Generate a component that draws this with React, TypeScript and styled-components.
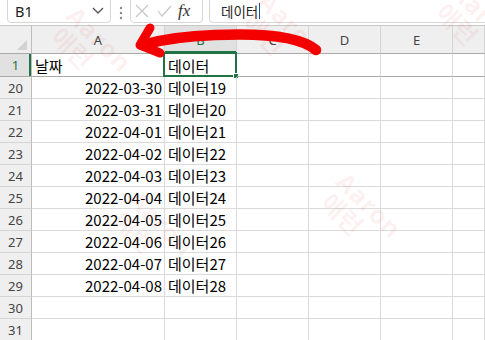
import React from 'react';
import styled, { createGlobalStyle } from 'styled-components';

const GlobalStyle = createGlobalStyle`
  * { box-sizing: border-box; }
  html, body { margin: 0; padding: 0; background: #fff; overflow: hidden; }
  body { font-family: "Noto Sans", "Noto Sans CJK KR", sans-serif; }
`;

const Page = styled.div`
  position: relative;
  width: 485px;
  height: 340px;
  overflow: hidden;
  background: #fff;
`;

const Toolbar = styled.div`
  height: 26px;
  display: flex;
  align-items: flex-end;
  padding: 0 0 2px 7px;
  border-bottom: 1px solid #c8c8c8;
  overflow: hidden;
`;

const Box = styled.div<{ w?: number }>`
  height: 31px;
  flex: ${p => (p.w ? `0 0 ${p.w}px` : '1 0 auto')};
  border: 1px solid #d6d6d6;
  border-radius: 4px;
  background: #fff;
  display: flex;
  align-items: center;
  padding-top: 7px;
`;

const NameText = styled.span`
  flex: 1;
  padding-left: 7px;
  font-family: "Noto Sans", sans-serif;
  font-size: 14.5px;
  color: #222;
`;

const Dots = styled.div`
  width: 19px;
  display: flex;
  justify-content: center;
  padding-bottom: 3px;
`;

const Spacer = styled.div`
  width: 6px;
`;

const IconSlot = styled.div`
  display: flex;
  align-items: center;
  justify-content: center;
  width: 22px;
`;

const Fx = styled.span`
  font-family: "Liberation Serif", "DejaVu Serif", serif;
  font-style: italic;
  font-size: 17px;
  color: #333;
  margin-left: 3px;
`;

const FormulaText = styled.span`
  padding-left: 11px;
  font-family: "Noto Sans CJK KR", sans-serif;
  font-size: 13.5px;
  color: #222;
  display: flex;
  align-items: center;
`;

const Caret = styled.span`
  display: inline-block;
  width: 1px;
  height: 16px;
  background: #2b4f8c;
  margin-left: 1px;
`;

const Sheet = styled.div`
  display: grid;
  grid-template-columns: 32px 133px 72px 72px 72px 72px 1fr;
  grid-template-rows: 28px 23px repeat(12, 22px);
`;

const ColHeader = styled.div<{ active?: boolean }>`
  background: ${p => (p.active ? '#e1e1e1' : '#efefef')};
  border-right: 1px solid #d4d4d4;
  border-bottom: 1px solid #a9a9a9;
  box-shadow: ${p => (p.active ? 'inset 0 -2px 0 #217346' : 'none')};
  display: flex;
  align-items: center;
  justify-content: center;
  font-family: "Noto Sans", sans-serif;
  font-size: 13px;
  color: ${p => (p.active ? '#217346' : '#444')};
`;

const Corner = styled.div`
  background: #efefef;
  border-right: 1px solid #bdbdbd;
  border-bottom: 1px solid #a9a9a9;
  display: flex;
  align-items: flex-end;
  justify-content: flex-end;
  padding: 0 4px 3px 0;
`;

const RowHeader = styled.div<{ active?: boolean; frozen?: boolean }>`
  background: ${p => (p.active ? '#e1e1e1' : '#efefef')};
  border-right: 1px solid #bdbdbd;
  border-bottom: 1px solid ${p => (p.frozen ? '#a9a9a9' : '#d4d4d4')};
  box-shadow: ${p => (p.active ? 'inset -2px 0 0 #217346' : 'none')};
  display: flex;
  align-items: center;
  justify-content: center;
  font-family: "Noto Sans", sans-serif;
  font-size: 13px;
  color: ${p => (p.active ? '#217346' : '#444')};
`;

const Cell = styled.div<{ right?: boolean; frozen?: boolean }>`
  position: relative;
  border-right: 1px solid #dadada;
  border-bottom: 1px solid ${p => (p.frozen ? '#a9a9a9' : '#dadada')};
  display: flex;
  align-items: center;
  justify-content: ${p => (p.right ? 'flex-end' : 'flex-start')};
  padding: 0 2px 0 3px;
  font-family: "Noto Sans CJK KR", "Noto Sans", sans-serif;
  font-size: 15px;
  color: #000;
  white-space: nowrap;
`;

const Selection = styled.div`
  position: absolute;
  left: -2px;
  top: -2px;
  right: -1px;
  bottom: -1px;
  border: 2px solid #217346;
  pointer-events: none;
`;

const FillHandle = styled.div`
  position: absolute;
  right: -4px;
  bottom: -4px;
  width: 6px;
  height: 6px;
  background: #217346;
  border: 1px solid #fff;
`;

const Overlay = styled.svg`
  position: absolute;
  left: 0;
  top: 0;
  pointer-events: none;
`;

const Watermark = styled.div`
  position: absolute;
  transform: rotate(45deg);
  transform-origin: left top;
  color: rgba(230, 30, 30, 0.07);
  font-family: "Noto Sans", "Noto Sans CJK KR", sans-serif;
  font-weight: 700;
  line-height: 1;
  white-space: nowrap;
  pointer-events: none;
`;

const WmTop = styled.div`
  font-size: 25px;
  letter-spacing: 1px;
`;

const WmBottom = styled.div`
  font-size: 25px;
  margin-left: 4px;
  font-family: "Noto Sans CJK KR", sans-serif;
`;

const columns = ['A', 'B', 'C', 'D', 'E', ''];

const rows = [
  ['2022-03-30', '데이터19'],
  ['2022-03-31', '데이터20'],
  ['2022-04-01', '데이터21'],
  ['2022-04-02', '데이터22'],
  ['2022-04-03', '데이터23'],
  ['2022-04-04', '데이터24'],
  ['2022-04-05', '데이터25'],
  ['2022-04-06', '데이터26'],
  ['2022-04-07', '데이터27'],
  ['2022-04-08', '데이터28'],
  ['', ''],
  ['', ''],
];

// faint "Aaron 애런" stamps over the capture
const marks = [
  { x: 80, y: 2 },
  { x: 272, y: -12 },
  { x: 465, y: -22 },
  { x: 350, y: 168 },
  { x: 142, y: 186 },
];

const App: React.FC = () => {
  return (
    <Page>
      <GlobalStyle />
      <Toolbar>
        <Box w={104}>
          <NameText>B1</NameText>
          <svg width="22" height="12" viewBox="0 0 22 12">
            <polyline points="5,3 10,8 15,3" fill="none" stroke="#555" strokeWidth="1.3" />
          </svg>
        </Box>
        <Dots>
          <svg width="4" height="14" viewBox="0 0 4 14">
            <circle cx="2" cy="2" r="1.2" fill="#8a8a8a" />
            <circle cx="2" cy="7" r="1.2" fill="#8a8a8a" />
            <circle cx="2" cy="12" r="1.2" fill="#8a8a8a" />
          </svg>
        </Dots>
        <Box w={73}>
          <IconSlot>
            <svg width="14" height="14" viewBox="0 0 14 14">
              <path d="M1 1 L13 13 M13 1 L1 13" stroke="#c6c6c6" strokeWidth="1.2" />
            </svg>
          </IconSlot>
          <IconSlot>
            <svg width="15" height="12" viewBox="0 0 15 12">
              <polyline points="1,6 5,11 14,1" fill="none" stroke="#c6c6c6" strokeWidth="1.2" />
            </svg>
          </IconSlot>
          <Fx>fx</Fx>
        </Box>
        <Spacer />
        <Box style={{ marginRight: -10 }}>
          <FormulaText>
            데이터
            <Caret />
          </FormulaText>
        </Box>
      </Toolbar>

      <Sheet>
        <Corner>
          <svg width="10" height="10" viewBox="0 0 10 10">
            <polygon points="10,0 10,10 0,10" fill="#d2d2d2" />
          </svg>
        </Corner>
        {columns.map((c, i) => (
          <ColHeader key={i} active={c === 'B'}>
            {c}
          </ColHeader>
        ))}

        <RowHeader active frozen>
          1
        </RowHeader>
        <Cell frozen>날짜</Cell>
        <Cell frozen>
          데이터
          <Selection>
            <FillHandle />
          </Selection>
        </Cell>
        {[0, 1, 2, 3].map(i => (
          <Cell key={i} frozen />
        ))}

        {rows.map((r, i) => (
          <React.Fragment key={i}>
            <RowHeader>{20 + i}</RowHeader>
            <Cell right>{r[0]}</Cell>
            <Cell>{r[1]}</Cell>
            <Cell />
            <Cell />
            <Cell />
            <Cell />
          </React.Fragment>
        ))}
      </Sheet>

      {marks.map((m, i) => (
        <Watermark key={i} style={{ left: m.x, top: m.y }}>
          <WmTop>Aaron</WmTop>
          <WmBottom>애런</WmBottom>
        </Watermark>
      ))}

      <Overlay width="485" height="340" viewBox="0 0 485 340">
        <path
          d="M316 50 C 300 36, 260 33, 215 35 C 185 36, 160 40, 142 45"
          fill="none"
          stroke="#f50000"
          strokeWidth="10.5"
          strokeLinecap="round"
          strokeLinejoin="round"
        />
        <path
          d="M150 28 L 140 45 L 160 53"
          fill="none"
          stroke="#f50000"
          strokeWidth="9"
          strokeLinecap="round"
          strokeLinejoin="round"
        />
      </Overlay>
    </Page>
  );
};

export default App;
